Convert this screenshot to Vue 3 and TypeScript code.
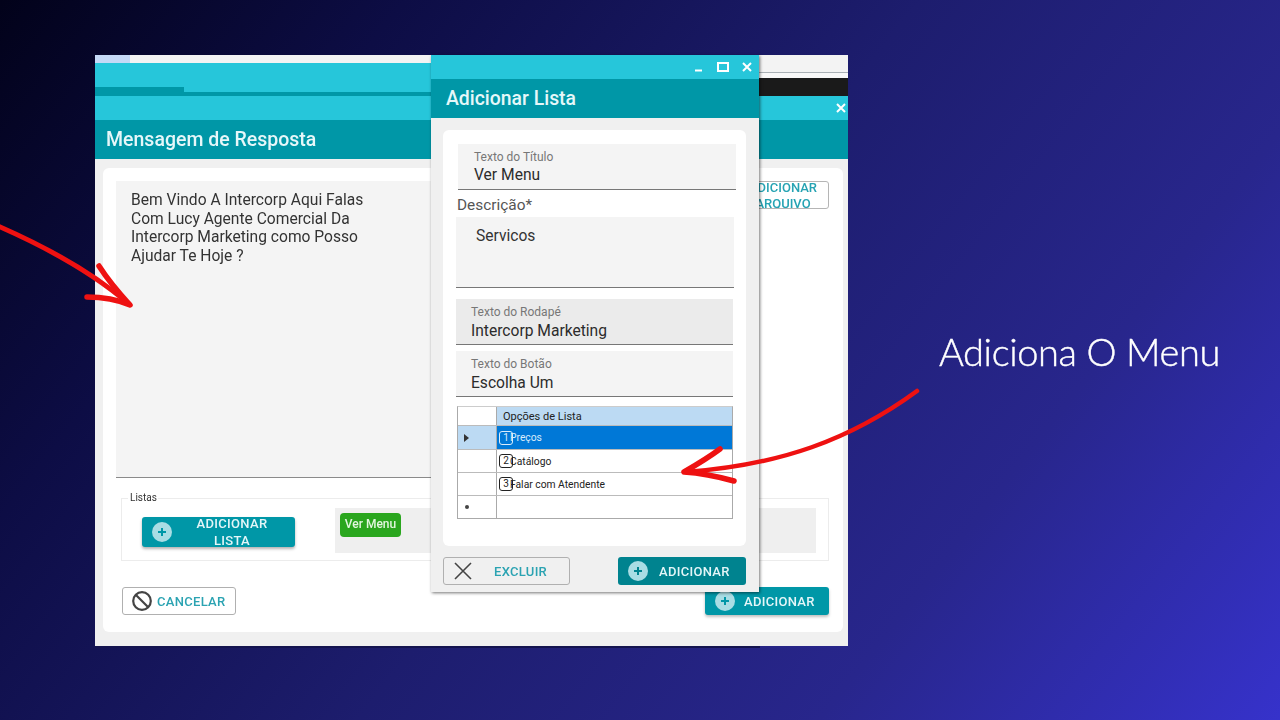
<script setup lang="ts">
interface ListOption {
  num: string
  label: string
  selected?: boolean
}

const options: ListOption[] = [
  { num: '1', label: 'Preços', selected: true },
  { num: '2', label: 'Catálogo' },
  { num: '3', label: 'Falar com Atendente' },
]
</script>

<template>
  <div class="slide">
    <!-- window behind -->
    <div class="panel">
      <div class="chrome">
        <div class="chrome-left">
          <div class="strip"><span class="strip-tab"></span></div>
          <div class="chrome-cyan"></div>
          <div class="chrome-dark"></div>
          <div class="chrome-line"></div>
        </div>
        <div class="chrome-right">
          <div class="chrome-grey"></div>
          <div class="chrome-white"></div>
          <div class="chrome-black"></div>
        </div>
      </div>
      <div class="panel-bar">
        <svg width="10" height="10" viewBox="0 0 10 10"><path d="M1 1l8 8M9 1l-8 8" stroke="#fff" stroke-width="2" /></svg>
      </div>
      <div class="panel-title">Mensagem de Resposta</div>
      <div class="panel-body">
        <div class="card">
          <div class="message-row">
            <div class="message">
              Bem Vindo A Intercorp Aqui Falas<br />
              Com Lucy Agente Comercial Da<br />
              Intercorp Marketing como Posso<br />
              Ajudar Te Hoje ?
            </div>
            <div class="attach"><span>ADICIONAR<br />ARQUIVO</span></div>
          </div>
          <fieldset class="lists">
            <legend>Listas</legend>
            <button class="btn-teal add-list">
              <svg class="plus" width="20" height="20" viewBox="0 0 20 20"><circle cx="10" cy="10" r="10" fill="#a9dde4" /><path d="M10 6v8M6 10h8" stroke="#0097a7" stroke-width="2" /></svg>
              <span class="add-list-text">ADICIONAR<br />LISTA</span>
            </button>
            <div class="chips"><span class="chip">Ver Menu</span></div>
          </fieldset>
          <div class="panel-actions">
            <button class="btn-outline cancel">
              <svg width="22" height="22" viewBox="0 0 22 22"><circle cx="11" cy="11" r="8.8" fill="none" stroke="#444" stroke-width="2.2" /><path d="M5 5l12 12" stroke="#444" stroke-width="2.2" /></svg>
              CANCELAR
            </button>
            <button class="btn-teal add-main">
              <svg class="plus" width="20" height="20" viewBox="0 0 20 20"><circle cx="10" cy="10" r="10" fill="#a9dde4" /><path d="M10 6v8M6 10h8" stroke="#0097a7" stroke-width="2" /></svg>
              ADICIONAR
            </button>
          </div>
        </div>
      </div>
    </div>
    <div class="under-strip"></div>

    <!-- dialog on top -->
    <div class="modal">
      <div class="modal-bar">
        <svg width="10" height="10" viewBox="0 0 10 10"><path d="M1 8.5h7" stroke="#fff" stroke-width="2" /></svg>
        <svg width="12" height="10" viewBox="0 0 12 10"><rect x="1" y="1" width="10" height="8" fill="none" stroke="#fff" stroke-width="2" /></svg>
        <svg width="10" height="10" viewBox="0 0 10 10"><path d="M1 1l8 8M9 1l-8 8" stroke="#fff" stroke-width="2" /></svg>
      </div>
      <div class="modal-title">Adicionar Lista</div>
      <div class="modal-body">
        <div class="modal-card">
          <div class="field field-title">
            <label>Texto do Título</label>
            <div class="value">Ver Menu</div>
          </div>
          <div class="desc-label">Descrição*</div>
          <div class="desc">Servicos</div>
          <div class="field field-footer">
            <label>Texto do Rodapé</label>
            <div class="value">Intercorp Marketing</div>
          </div>
          <div class="field field-button">
            <label>Texto do Botão</label>
            <div class="value">Escolha Um</div>
          </div>
          <div class="grid">
            <div class="grid-row grid-head">
              <div class="gutter"></div>
              <div class="cell">Opções de Lista</div>
            </div>
            <div v-for="o in options" :key="o.num" class="grid-row" :class="{ selected: o.selected }">
              <div class="gutter"><span v-if="o.selected" class="caret"></span></div>
              <div class="cell"><span class="num">{{ o.num }}</span><span class="opt">{{ o.label }}</span></div>
            </div>
            <div class="grid-row last">
              <div class="gutter"><span class="dot"></span></div>
              <div class="cell"></div>
            </div>
          </div>
        </div>
        <div class="modal-actions">
          <button class="btn-outline remove">
            <svg width="20" height="20" viewBox="0 0 20 20"><path d="M2 2l16 16M18 2L2 18" stroke="#444" stroke-width="1.6" /></svg>
            <span>EXCLUIR</span>
          </button>
          <button class="btn-teal add-modal">
            <svg class="plus" width="20" height="20" viewBox="0 0 20 20"><circle cx="10" cy="10" r="10" fill="#a9dde4" /><path d="M10 6v8M6 10h8" stroke="#00838f" stroke-width="2" /></svg>
            ADICIONAR
          </button>
        </div>
      </div>
    </div>

    <svg class="arrows" width="1280" height="720" viewBox="0 0 1280 720">
      <g fill="none" stroke="#ee1111" stroke-linecap="round" stroke-linejoin="round">
        <path d="M-2 226C46 247 92 272 129 304" stroke-width="5" />
        <path d="M99 266C108 280 118 292 130 305C116 299 102 297 87 297" stroke-width="5.5" />
        <path d="M917 391C850 440 780 465 686 472" stroke-width="4.5" />
        <path d="M720 449C708 458 696 465 684 472C700 473 716 476 734 481" stroke-width="5.5" />
      </g>
    </svg>

    <div class="caption">Adiciona O Menu</div>
  </div>
</template>

<style>
html, body {
  margin: 0;
  background: #0a0a30;
}
</style>

<style scoped>
.slide {
  position: relative;
  width: 1280px;
  height: 720px;
  overflow: hidden;
  background: linear-gradient(128deg, #02021a 0%, #0d0d45 22%, #1d1d6e 50%, #28268c 75%, #3632cb 100%);
  font-family: Roboto, "Liberation Sans", sans-serif;
}

button {
  font-family: inherit;
  border: none;
  padding: 0;
}

/* back window */
.panel {
  position: absolute;
  left: 95px;
  top: 55px;
  width: 753px;
  height: 591px;
  display: flex;
  flex-direction: column;
  background: #f0f0f0;
  filter: blur(0.4px);
}

.chrome {
  display: flex;
  height: 41px;
}

.chrome-left {
  width: 400px;
  background: #26c6da;
}

.strip {
  height: 8px;
  background: #f3f3f3;
}

.strip-tab {
  display: block;
  width: 35px;
  height: 8px;
  background: #c5d9f6;
}

.chrome-cyan {
  height: 24px;
}

.chrome-dark {
  width: 89px;
  height: 5px;
  background: #0097a7;
}

.chrome-line {
  height: 4px;
  background: #0097a7;
}

.chrome-right {
  flex: 1;
}

.chrome-grey {
  height: 17px;
  background: #f3f3f3;
  border-bottom: 1px solid #a9b0b5;
}

.chrome-white {
  height: 5px;
  background: #f8f8f8;
}

.chrome-black {
  height: 18px;
  background: #1a1a1a;
}

.panel-bar {
  height: 24px;
  background: #26c6da;
  display: flex;
  justify-content: flex-end;
  align-items: center;
  padding-right: 2px;
}

.panel-title {
  height: 39px;
  line-height: 39px;
  padding-left: 11px;
  background: #0097a7;
  color: #e6f7f9;
  font-size: 19.5px;
  font-weight: 500;
}

.panel-body {
  flex: 1;
  padding: 9px 5px 14px 8px;
  display: flex;
}

.card {
  flex: 1;
  background: #fff;
  border-radius: 6px;
  padding: 13px 14px 0 13px;
}

.message-row {
  display: flex;
  gap: 10px;
}

.message {
  flex: 1;
  height: 286px;
  padding: 10px 15px 0;
  background: #f4f4f4;
  border-bottom: 1px solid #8a8a8a;
  color: #333;
  font-size: 15.6px;
  line-height: 18.7px;
}

.attach {
  width: 84px;
  height: 28px;
  box-sizing: border-box;
  border: 1px solid #b5b5b5;
  border-radius: 3px;
  padding-right: 8px;
  text-align: center;
  overflow: hidden;
  color: #26a3b3;
  font-size: 13px;
  font-weight: 500;
  line-height: 16px;
}

.attach span {
  display: block;
  margin-top: -2px;
}

.lists {
  margin: 14px 0 0 5px;
  padding: 4px 12px 7px 20px;
  height: 69px;
  box-sizing: border-box;
  border: 1px solid #ececec;
  display: flex;
  gap: 40px;
  align-items: flex-start;
}

.lists legend {
  margin-left: -14px;
  padding: 0 1px 0 2px;
  font-size: 10px;
  line-height: 12px;
  color: #333;
}

.btn-teal {
  display: flex;
  align-items: center;
  background: #0097a7;
  color: #e4f6f8;
  border-radius: 3px;
  font-size: 13px;
  font-weight: 500;
  letter-spacing: 0.3px;
}

.add-list {
  width: 153px;
  height: 30px;
  margin-top: 9px;
  padding-left: 10px;
  flex: none;
  box-shadow: 0 2px 3px rgba(0, 0, 0, 0.3);
}

.add-list-text {
  flex: 1;
  text-align: center;
  line-height: 17px;
  padding-right: 3px;
}

.chips {
  flex: 1;
  height: 45px;
  padding: 5px;
  box-sizing: border-box;
  background: #efefef;
}

.chip {
  display: block;
  width: 61px;
  height: 24px;
  line-height: 23px;
  text-align: center;
  background: #2aa61e;
  color: #e2f6df;
  border-radius: 4px;
  font-size: 12px;
  font-weight: 500;
}

.panel-actions {
  display: flex;
  justify-content: space-between;
  margin: 26px 0 0 6px;
}

.btn-outline {
  display: flex;
  align-items: center;
  background: #fff;
  border: 1px solid #b0b0b0;
  border-radius: 3px;
  color: #2ba3b2;
  font-size: 13px;
  font-weight: 500;
  letter-spacing: 0.3px;
  box-sizing: border-box;
}

.cancel {
  width: 114px;
  height: 28px;
  padding-left: 8px;
  gap: 4px;
}

.add-main {
  width: 124px;
  height: 28px;
  padding-left: 10px;
  gap: 9px;
  box-shadow: 0 2px 3px rgba(0, 0, 0, 0.25);
}

.under-strip {
  position: absolute;
  left: 95px;
  top: 646px;
  width: 665px;
  height: 2px;
  background: #14144f;
}

/* dialog */
.modal {
  position: absolute;
  left: 431px;
  top: 55px;
  width: 328px;
  height: 537px;
  display: flex;
  flex-direction: column;
  background: #f0f0f0;
  box-shadow: 1px 1px 3px rgba(0, 0, 0, 0.55);
  filter: blur(0.4px);
}

.modal-bar {
  height: 24px;
  background: #26c6da;
  display: flex;
  justify-content: flex-end;
  align-items: center;
  gap: 13px;
  padding-right: 7px;
}

.modal-title {
  height: 39px;
  line-height: 40px;
  padding-left: 15px;
  background: #0097a7;
  color: #e6f7f9;
  font-size: 19.4px;
  font-weight: 500;
}

.modal-body {
  flex: 1;
  padding: 12px 13px 0 12px;
}

.modal-card {
  height: 416px;
  box-sizing: border-box;
  background: #fff;
  border-radius: 6px;
  padding-top: 14px;
}

.field {
  height: 46px;
  box-sizing: border-box;
  background: #f4f4f4;
  border-bottom: 1px solid #777;
  padding: 7px 0 0 15px;
}

.field label {
  display: block;
  font-size: 12px;
  line-height: 13px;
  color: #777;
}

.value {
  font-size: 15.6px;
  line-height: 18px;
  margin-top: 3px;
  color: #2c2c2c;
}

.field-title {
  margin: 0 10px 0 15px;
  padding-left: 16px;
}

.field-title .value {
  margin-top: 2px;
}

.desc-label {
  margin: 6px 0 0 14px;
  height: 21px;
  line-height: 18px;
  font-size: 15.4px;
  color: #555;
}

.desc {
  margin: 0 12px 0 13px;
  height: 71px;
  box-sizing: border-box;
  background: #f4f4f4;
  border-bottom: 1px solid #777;
  padding: 10px 0 0 20px;
  font-size: 15.6px;
  line-height: 18px;
  color: #333;
}

.field-footer {
  margin: 11px 13px 0 13px;
  background: #ebebeb;
}

.field-button {
  margin: 6px 13px 0 13px;
}

.grid {
  margin: 9px 13px 0 14px;
  border-right: 1px solid #aaa;
  border-left: 1px solid #aaa;
  border-top: 1px solid #ccc;
  border-bottom: 1px solid #aaa;
}

.grid-row {
  display: flex;
  height: 23px;
  border-bottom: 1px solid #bbb;
  box-sizing: border-box;
  font-size: 11px;
  color: #222;
}

.grid-row:nth-child(2) {
  height: 24px;
}

.grid-row.last {
  height: 22px;
  border-bottom: none;
}

.grid-row.grid-head {
  height: 19px;
}

.gutter {
  width: 39px;
  flex: none;
  box-sizing: border-box;
  border-right: 1px solid #aaa;
  display: flex;
  align-items: center;
  padding-left: 6px;
}

.cell {
  flex: 1;
  display: flex;
  align-items: center;
  padding-left: 2px;
}

.grid-head .cell {
  background: #bcdaf3;
  padding-left: 6px;
}

.selected .gutter {
  background: #bcdaf3;
}

.selected .cell {
  background: #0078d7;
  color: #d9ecfb;
}

.num {
  display: block;
  width: 14px;
  height: 14px;
  box-sizing: border-box;
  border: 1.5px solid #222;
  border-radius: 3px;
  font-size: 10px;
  line-height: 11px;
  text-align: center;
}

.selected .num {
  border-color: #d9ecfb;
}

.opt {
  margin-left: -3px;
  font-size: 10.3px;
}

.caret {
  width: 0;
  height: 0;
  border-left: 5px solid #333;
  border-top: 4px solid transparent;
  border-bottom: 4px solid transparent;
}

.dot {
  width: 4px;
  height: 4px;
  border-radius: 50%;
  background: #444;
  margin-left: 1px;
}

.modal-actions {
  display: flex;
  justify-content: space-between;
  margin-top: 11px;
}

.remove {
  width: 127px;
  height: 28px;
  background: #f0f0f0;
  padding-left: 9px;
  gap: 21px;
}

.add-modal {
  width: 128px;
  height: 28px;
  padding-left: 10px;
  gap: 11px;
  background: #00838f;
}

.arrows {
  position: absolute;
  left: 0;
  top: 0;
  filter: blur(0.3px);
}

.caption {
  position: absolute;
  left: 939px;
  top: 328px;
  font-family: Lato, "Open Sans", sans-serif;
  font-weight: 300;
  font-size: 38px;
  line-height: 46px;
  letter-spacing: -0.4px;
  -webkit-text-stroke: 0.4px #fff;
  color: #fff;
  white-space: nowrap;
}
</style>
